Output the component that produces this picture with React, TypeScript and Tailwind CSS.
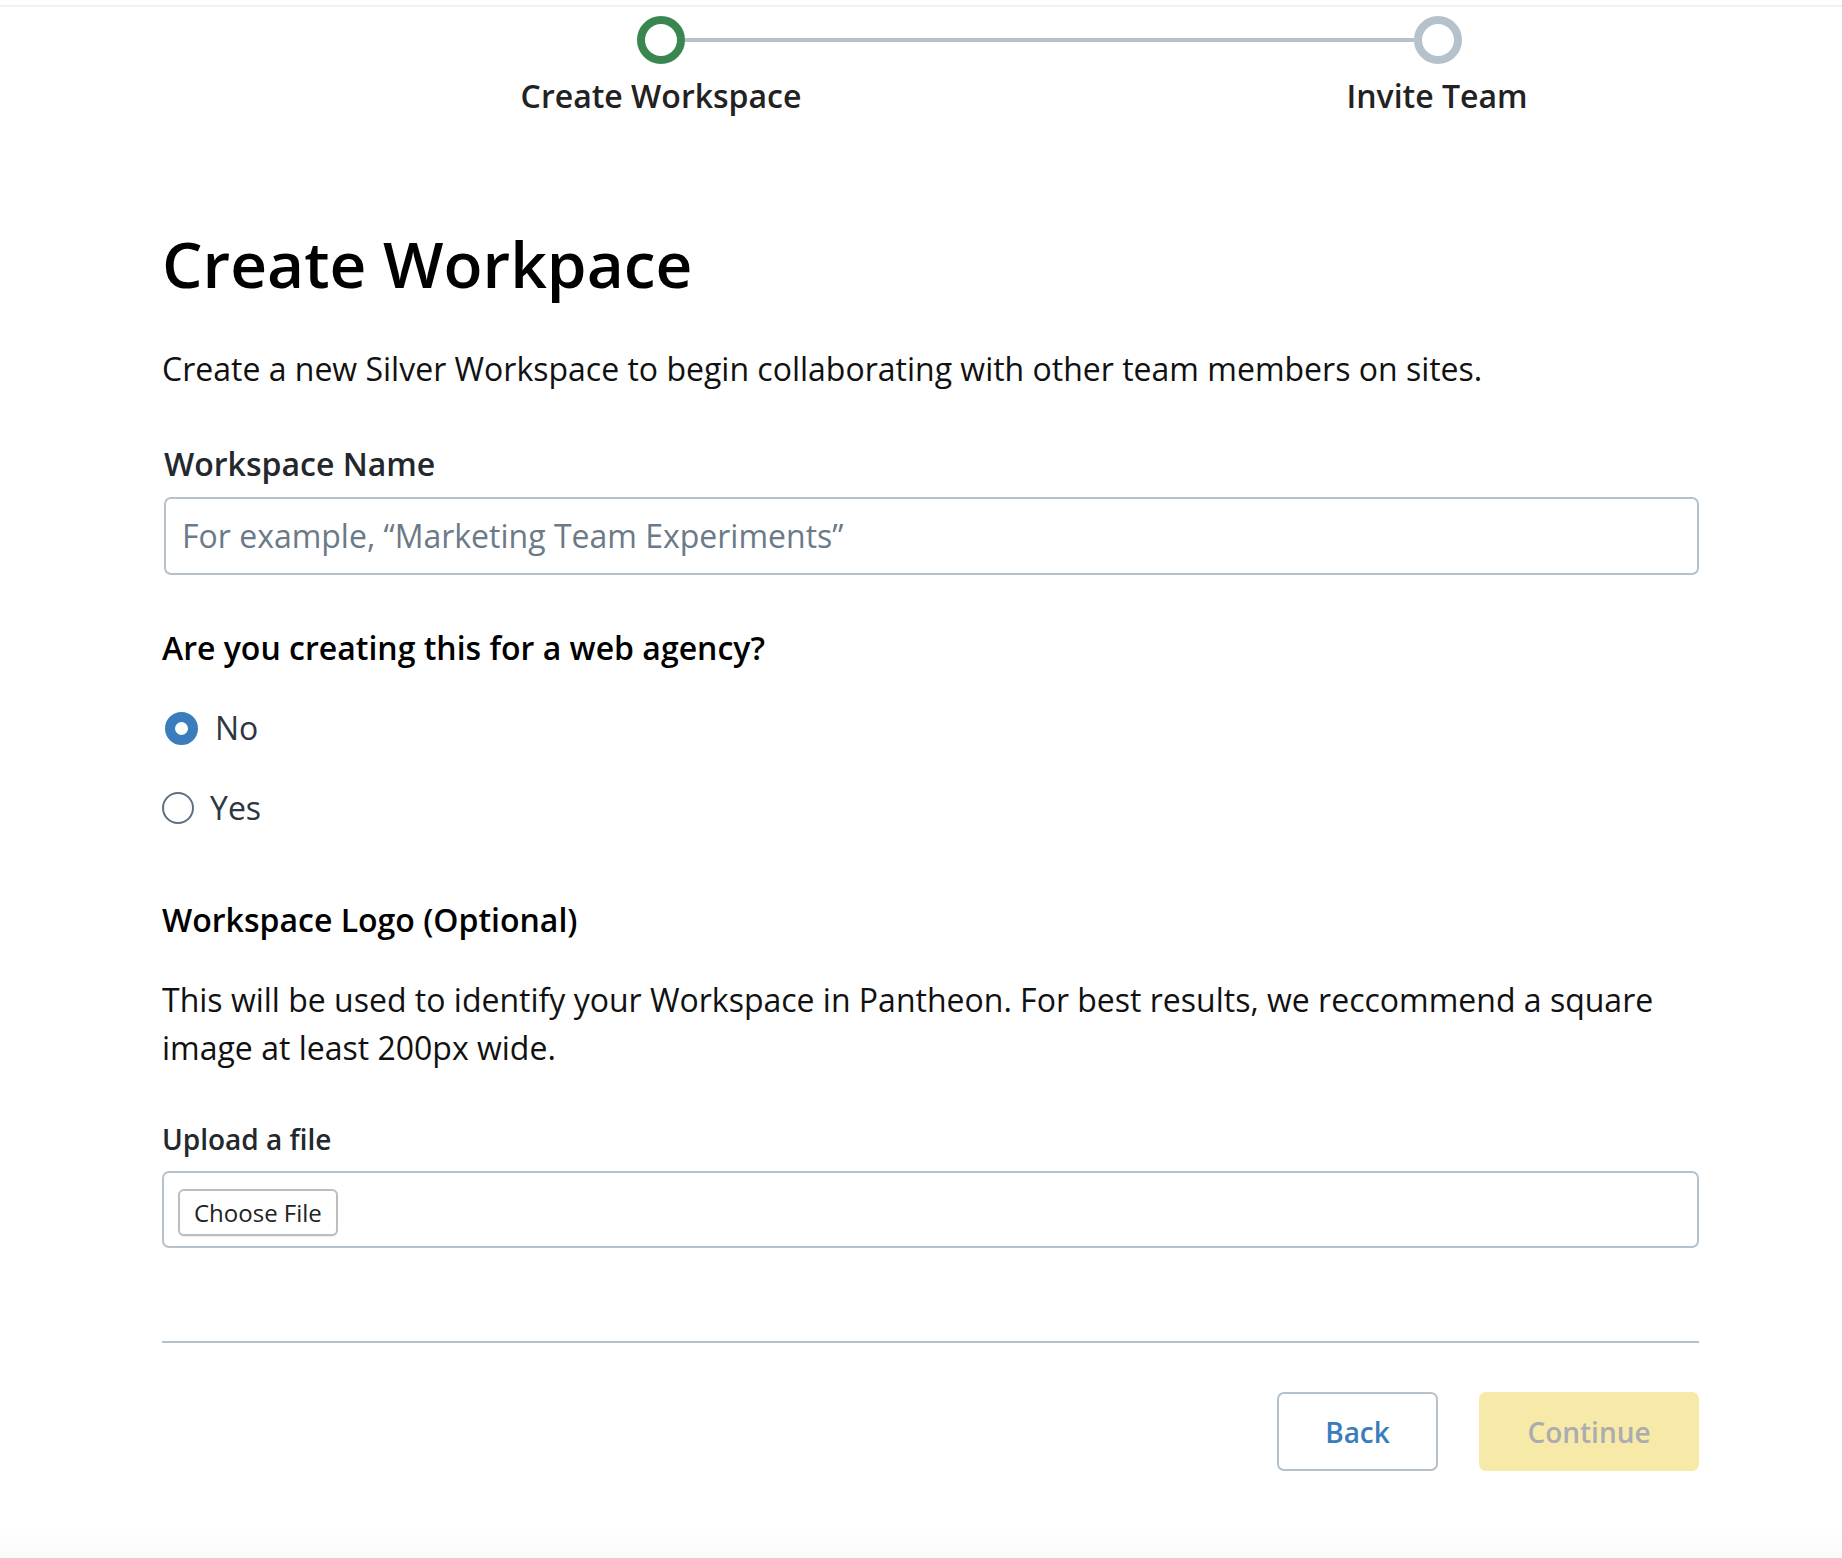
import React from "react";

export default function App() {
  return (
    <div className="relative w-[1842px] h-[1558px] bg-white overflow-hidden" style={{ fontFamily: '"Open Sans", sans-serif' }}>
      <div className="mt-[5px] border-t-2 border-[#eef2f2]" />
      {/* Stepper */}
      <div className="ml-[637px] w-[825px] mt-[9px] flex items-center">
        <div className="w-[48px] h-[48px] rounded-full border-[8px] border-[#3a8651] bg-white" />
        <div className="flex-1 h-[4px] bg-[#b5c2cc]" />
        <div className="w-[48px] h-[48px] rounded-full border-[8px] border-[#b5c2cc] bg-white" />
      </div>
      <div className="ml-[511px] w-[1076px] flex justify-between mt-[10px]">
        <div className="w-[300px] text-center text-[32px] leading-[44px] font-semibold text-[#222222]">Create Workspace</div>
        <div className="w-[300px] text-center text-[32px] leading-[44px] font-semibold text-[#222222]">Invite Team</div>
      </div>

      <div className="ml-[162px] w-[1537px]">
        <h1 className="mt-[106px] text-[64px] leading-[80px] font-semibold text-black">Create Workpace</h1>
        <p className="mt-[43px] text-[32px] leading-[44px] text-[#111111]">
          Create a new Silver Workspace to begin collaborating with other team members on sites.
        </p>

        <label className="block mt-[51px] ml-[2px] text-[32px] leading-[44px] font-semibold text-[#23282d]">Workspace Name</label>
        <div className="mt-[11px] ml-[2px] h-[78px] rounded-[7px] border-2 border-[#b5c2cc] flex items-center px-[16px]">
          <span className="text-[32px] text-[#6b7a88]">For example, “Marketing Team Experiments”</span>
        </div>

        <div className="mt-[51px] text-[32px] leading-[44px] font-semibold text-black">Are you creating this for a web agency?</div>

        <div className="mt-[38px] flex items-center h-[40px]">
          <div className="ml-[3px] w-[33px] h-[33px] rounded-full border-[10px] border-[#3a7dbd] bg-white" />
          <span className="ml-[17px] text-[32px] text-[#2e3640]">No</span>
        </div>
        <div className="mt-[40px] flex items-center h-[40px]">
          <div className="w-[32px] h-[32px] rounded-full border-2 border-[#5f6f7f] bg-white" />
          <span className="ml-[16px] text-[32px] text-[#2e3640]">Yes</span>
        </div>

        <div className="mt-[70px] text-[32px] leading-[44px] font-semibold text-black">Workspace Logo (Optional)</div>
        <p className="mt-[34px] text-[32px] leading-[48px] text-[#111111]">
          This will be used to identify your Workspace in Pantheon. For best results, we reccommend a square image at least 200px wide.
        </p>

        <div className="mt-[47px] text-[28px] leading-[40px] font-semibold text-[#23282d]">Upload a file</div>
        <div className="mt-[12px] h-[77px] rounded-[7px] border-2 border-[#b5c2cc] flex items-start pt-[16px] px-[14px]">
          <button className="h-[47px] px-[14px] rounded-[6px] border-2 border-[#bdbdbd] bg-white text-[24px] leading-[30px] text-[#222] shadow-[0_1px_1px_rgba(0,0,0,0.08)]">Choose File</button>
        </div>

        <div className="mt-[93px] h-[2px] bg-[#b5c2cc]" />

        <div className="mt-[49px] flex justify-end gap-[41px]">
          <button className="w-[161px] h-[79px] rounded-[7px] border-2 border-[#b5c2cc] bg-white text-[28px] font-semibold text-[#3a7dbd]">Back</button>
          <button className="w-[220px] h-[79px] rounded-[7px] bg-[#f7eaa9] text-[28px] font-semibold text-[#a9adb0]">Continue</button>
        </div>
      </div>
      <div className="absolute left-0 right-0 bottom-0 h-[32px] bg-gradient-to-b from-white to-[#fafafa]" />
    </div>
  );
}
